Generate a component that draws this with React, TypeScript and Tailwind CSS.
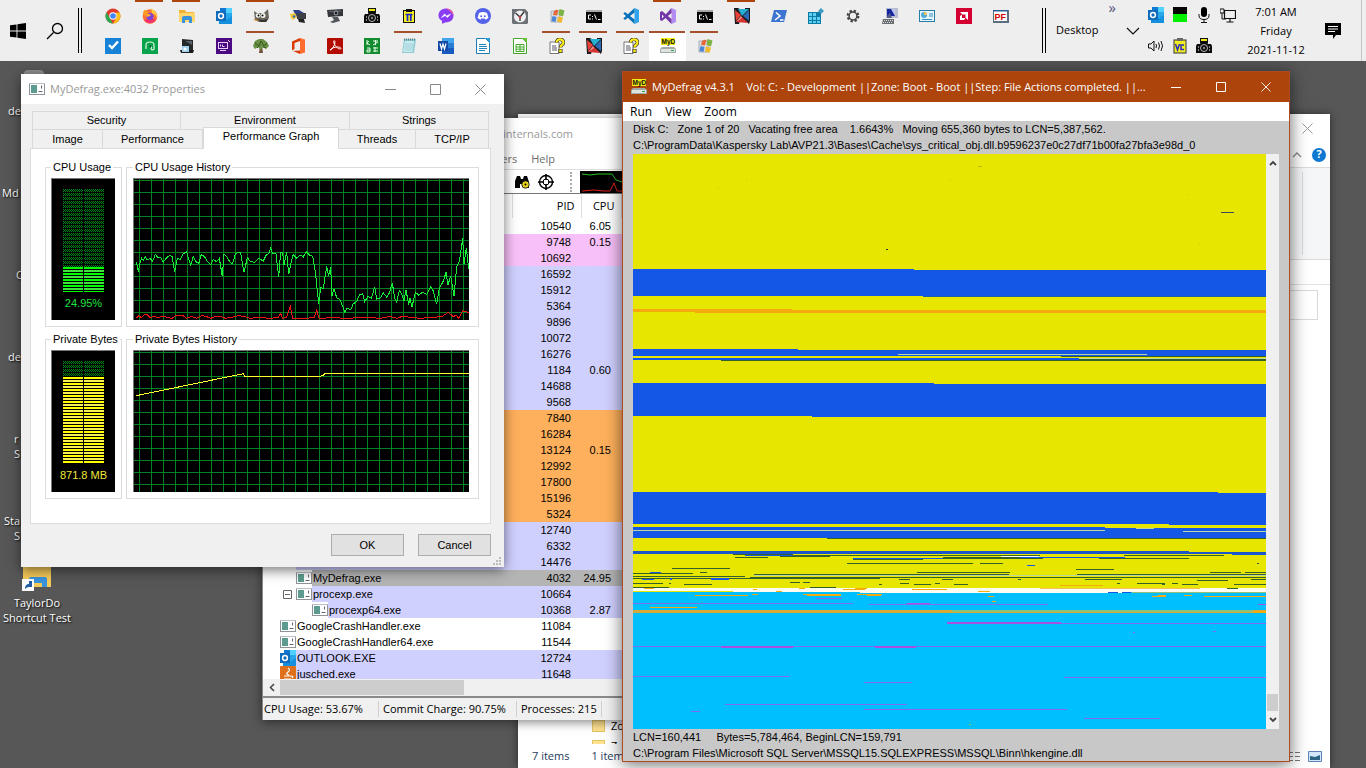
import React from "react";

type IconName =
  | "chrome" | "firefox" | "folder" | "outlook" | "gimp" | "tools" | "webcam" | "camera" | "clipPi"
  | "messenger" | "discord" | "clock" | "flags" | "cmd" | "vscode" | "vs" | "nshape" | "powershell"
  | "regedit" | "gear" | "computer" | "card" | "amd" | "pf" | "todo" | "evergreen" | "disk" | "purple"
  | "tree" | "office" | "acrobat" | "kanji" | "notepad" | "word" | "writer" | "calc" | "help" | "myd"
  | "led" | "mic" | "network" | "speaker" | "clipVc" | "app" | "java";

const drawings: Record<IconName, React.ReactNode> = {
  chrome: (
    <>
      <circle cx="8" cy="8" r="7.5" fill="#e33b2e" />
      <path d="M1.5 4.2 5 10.5 8 15.5A7.5 7.5 0 0 1 1.5 4.2Z" fill="#2da94f" />
      <path d="M8 15.5 11.5 9.5 11 4.5H14.6A7.5 7.5 0 0 1 8 15.5Z" fill="#fbc116" />
      <circle cx="8" cy="8" r="3.7" fill="#fff" />
      <circle cx="8" cy="8" r="2.8" fill="#4285f4" />
    </>
  ),
  firefox: (
    <>
      <circle cx="8" cy="8.5" r="7.3" fill="#ff7139" />
      <path d="M9 0.5C13 2.5 15.6 6 15 10c-1-3-3-4-5-5Z" fill="#ffd23c" />
      <path d="M1 6C1 3 2.5 1.8 3 1.5 3.5 3.3 5 3.8 6.5 4L4 9Z" fill="#ff9a1f" />
      <path d="M2 12c3 4 9 4.500 12-0.500l-5-1Z" fill="#f0336e" />
      <circle cx="8" cy="8.400" r="3.500" fill="#7a40d8" />
      <path d="M4.500 6.500c2-1 4 0 4.500 1L5 9Z" fill="#ffb02e" />
    </>
  ),
  folder: (
    <>
      <path d="M0 2h6l1 2h8v10H0Z" fill="#f0b432" />
      <path d="M0 5h16v9H0Z" fill="#ffd66b" />
      <path d="M3 15V10q0-2 2-2h6q2 0 2 2v5h-3v-3H6v3Z" fill="#3a94dd" />
    </>
  ),
  outlook: (
    <>
      <path d="M4 0h12v14H4Z" fill="#28a8ea" />
      <path d="M10 0H16v5h-6Z" fill="#50d0ff" />
      <path d="M4 0h6v5H4Z" fill="#0f78d4" />
      <path d="M3 9l7 3 6-4v8H3Z" fill="#1490df" />
      <rect y="3" width="10" height="10" fill="#0f6cbd" />
      <circle cx="5" cy="8" r="2.400" fill="none" stroke="#fff" strokeWidth="1.500" />
    </>
  ),
  gimp: (
    <>
      <path d="M1 3l3 2h7l4-4 1 9-3 4H6L2 12Z" fill="#6b675e" />
      <path d="M3 11l5 3h5l2-3-5 1Z" fill="#35332e" />
      <circle cx="5" cy="7.500" r="2.300" fill="#f5f5f0" />
      <circle cx="10" cy="7.500" r="2.500" fill="#f5f5f0" />
      <circle cx="5.500" cy="7.500" r="1" />
      <circle cx="9.500" cy="7.500" r="1" />
      <path d="M0 11l7 1-4 1Z" fill="#d98c2b" />
    </>
  ),
  tools: (
    <>
      <path d="M3 2h6l5 3v5H7Z" fill="#2f3f86" />
      <path d="M7 5h9v6H7Z" fill="#3c3f45" />
      <path d="M0 6l5-1 2 4-4 3-2-2Z" fill="#f3c93a" />
      <path d="M8 11h6l1 4-6-1Z" fill="#222" />
      <circle cx="4" cy="8.500" r="1.300" fill="#3662b8" />
    </>
  ),
  webcam: (
    <>
      <path d="M0 2l16-1v7l-15 1Z" fill="#34363a" />
      <path d="M2 3.500l12-.5" stroke="#666a70" />
      <circle cx="9" cy="5" r="2.400" fill="#89919a" />
      <circle cx="9" cy="5" r="1.200" fill="#111" />
      <path d="M5 9h6l2 4-7 2-3-1 4-2Z" fill="#52555a" />
    </>
  ),
  camera: (
    <>
      <path d="M4 0h8v5H4Z" fill="#111" />
      <path d="M5 1h6v2H5Z" fill="#f0ec10" />
      <path d="M1 6h3l1-2h6l1 2h3l1 2v7H0V8Z" fill="#0c0c0c" />
      <circle cx="8" cy="10" r="3.500" fill="none" stroke="#b7b7b7" />
      <circle cx="8" cy="10" r="1.200" fill="#888" />
      <path d="M2.500 8v6M13.500 8v6" stroke="#8a8a8a" strokeDasharray="2 1" />
    </>
  ),
  clipPi: (
    <>
      <rect x="2" y="2" width="12" height="13" fill="#111" />
      <rect x="3" y="3" width="10" height="11" fill="#f5ee20" />
      <path d="M5 1h6v3H5Z" fill="#111" />
      <path d="M4.500 6.500h7M6.500 6v7M9.800 6v7" stroke="#1826c9" strokeWidth="1.700" />
    </>
  ),
  messenger: (
    <>
      <path d="M8 .5c4.500 0 7.500 3 7.500 7s-3 6.800-7.500 6.800l-4 1.500v-3C1.500 11.400.5 9.600.5 7.500c0-4 3-7 7.500-7Z" fill="#8a3cf5" />
      <path d="M8 .5c4.500 0 7.500 3 7.500 7L12 3Z" fill="#f0559a" />
      <path d="M3.500 9.500 6.500 6l2.300 2 3.700-2-3 3.500-2.300-2Z" fill="#fff" stroke="#fff" strokeWidth=".6" />
    </>
  ),
  discord: (
    <>
      <circle cx="8" cy="8" r="8" fill="#5562ea" />
      <path d="M4 5q4-2 8 0l1.500 5-3 1.800-.8-1.200H6.300l-.8 1.200-3-1.800Z" fill="#fff" />
      <circle cx="6.200" cy="8.200" r="1" fill="#5562ea" />
      <circle cx="9.800" cy="8.200" r="1" fill="#5562ea" />
    </>
  ),
  clock: (
    <>
      <path d="M0 1h16v14l-1 1H1l-1-1Z" fill="#6c7176" />
      <circle cx="8" cy="8.500" r="6" fill="#eef0f1" />
      <path d="M3.500 5 8 9l4-5M8 9v4" stroke="#333" strokeWidth="1.300" fill="none" />
      <path d="M12 0h4v4Z" fill="#eee" />
      <circle cx="8" cy="9" r="1.300" fill="#c5373c" />
    </>
  ),
  flags: (
    <>
      <path d="M2 3h9v11H2Z" fill="#d8dde4" stroke="#97a2b0" strokeWidth=".8" />
      <path d="M5 3q3-2 4.500-.5L8 7.500 4 7Z" fill="#e46a3b" />
      <path d="M10.500 1l5 1.500-1.500 6-4.500-1.500Z" fill="#7cb342" />
      <path d="M3.500 8l4 1-1 5-4-1Z" fill="#4b86d6" />
      <path d="M9 8.500l5 1-1.500 5.500-4.500-1.500Z" fill="#f2b92e" />
    </>
  ),
  cmd: (
    <>
      <rect y="2" width="16" height="13" fill="#050505" />
      <path d="M0 2h16v2H0Z" fill="#a9a9a9" />
      <path d="M5 7H2.500v4H5M6.500 8v1M6.500 10.500v1M8.500 6.500l2 5M12 11.500h2.500" stroke="#f5f5f5" fill="none" />
    </>
  ),
  vscode: (
    <>
      <path d="M11.500 0 16 2v12l-4.500 2Z" fill="#2fa5ee" />
      <path d="M11.500 0v4.500L2 12 .3 10.500ZM.3 5.500 2 4l9.500 7.500V16Z" fill="#0b70b8" />
    </>
  ),
  vs: (
    <>
      <path d="M11.500 0 16 2v12l-4.500 2Z" fill="#b28cf0" />
      <path d="M11.500 0v5L2 13 0 12V4l2-1 9.500 8V16L2 6.500v4L11.500 0Z" fill="#7236a8" />
    </>
  ),
  nshape: (
    <>
      <path d="M0 0h4l7 4V0h5v13l-1 3-8-7-2 7H1Z" fill="#1a1a1d" />
      <path d="M4 1h7l4 0-7 7Z" fill="#27aed3" />
      <path d="M1 2l6 5-5 6Z" fill="#e6423a" />
      <path d="M9 8l6-6v11Z" fill="#2a6ab6" />
      <path d="M2 14l5-6 7 7Z" fill="#d63232" />
      <path d="M2 14l5-6 1 2Z" fill="#f5908a" />
    </>
  ),
  powershell: (
    <>
      <path d="M3 2h13l-3 12H0Z" fill="#3c74d0" />
      <path d="M5 4.500 9 8l-5 4M9 12h3.500" stroke="#fff" strokeWidth="1.600" fill="none" />
    </>
  ),
  regedit: (
    <>
      <path d="M0 4h13v12H0Z" fill="#0c7ba8" />
      <path d="M1 5h3v3H1zM5 5h3v3H5zM1 9h3v3H1zM5 9h3v3H5zM9 9h3v3H9zM1 13h3v2H1zM5 13h3v2H5zM9 13h3v2H9z" fill="#5dd0f2" />
      <path d="M10 3l3-3 3 3-3 3Z" fill="#3f9cc4" />
    </>
  ),
  gear: (
    <>
      <circle cx="8" cy="8" r="5.300" fill="none" stroke="#444" strokeWidth="2.200" strokeDasharray="2.300 1.860" />
      <circle cx="8" cy="8" r="3.900" fill="none" stroke="#444" strokeWidth="1.500" />
    </>
  ),
  computer: (
    <>
      <path d="M4 0h12v10H4Z" fill="#b8bed2" />
      <path d="M5 1h8v7H5Z" fill="#1526a0" />
      <path d="M9 1h4v7Z" fill="#e9edff" opacity=".8" />
      <path d="M5 8l3-3 2 5H5Z" fill="#555b88" />
      <path d="M1 11h11v5H0Z" fill="#686d70" />
      <path d="M2 12.500h9M1 14.500h9" stroke="#ddd" strokeDasharray="1 1" />
    </>
  ),
  card: (
    <>
      <rect x=".5" y="2.500" width="15" height="11" fill="#e7f5fd" stroke="#2a7aa6" />
      <circle cx="5" cy="7" r="3" fill="#4facdc" />
      <path d="M5 7V4a3 3 0 0 1 3 3Z" fill="#f0c34d" />
      <path d="M10 6h4M10 8h4M3 11.500h10" stroke="#2f8fc1" />
    </>
  ),
  amd: (
    <>
      <rect width="16" height="16" fill="#d50032" />
      <path d="M4 4h8v8l-2.500-2.500v-3h-3ZM4 8l2-1.500V10h3.500L8 12H4Z" fill="#fff" />
    </>
  ),
  pf: (
    <>
      <rect y="2" width="16" height="13" fill="#5b6f80" />
      <rect x="1" y="3" width="13" height="10" fill="#fff" />
      <path d="M0 2h15v1.500H0Z" fill="#2a5f96" />
      <text x="1.500" y="12" fontSize="9" fontWeight="900" fontFamily="Liberation Sans, sans-serif" fill="#d40000">PF</text>
    </>
  ),
  todo: (
    <>
      <rect width="16" height="16" fill="#1683d8" />
      <path d="M4 7l3 3 6-6.500" stroke="#fff" strokeWidth="2.400" fill="none" />
    </>
  ),
  evergreen: (
    <>
      <rect width="16" height="16" fill="#08a34a" />
      <path d="M4 11V7q0-3 4-3t4 3v4q0 1-2 1-2-2 0-3" stroke="#dff7e7" strokeWidth="1.200" fill="none" />
      <path d="M7 8l2-1v3Z" fill="#0b5a2d" />
    </>
  ),
  disk: (
    <>
      <path d="M3 1l11 1v10H3Z" fill="#26292c" />
      <path d="M6 3l7 0v4Z" fill="#5a6168" />
      <path d="M1 12h14l-1 3H2Z" fill="#1b1b1b" />
      <path d="M3 8h7v6H3Z" fill="#9fd2ee" />
      <circle cx="6" cy="11" r="1.600" fill="#fff" />
    </>
  ),
  purple: (
    <>
      <rect width="16" height="16" fill="#4b0a82" />
      <rect x="2.500" y="4.500" width="9" height="6" fill="none" stroke="#e7cffa" />
      <path d="M4 12.500h6M4.500 6.500v2M6.500 6.500v2h2M12 2l2 2" stroke="#e7cffa" />
    </>
  ),
  tree: (
    <>
      <path d="M7 8h2l1 7H6Z" fill="#72523a" />
      <path d="M0 8l2-5 4-2 4 0 4 3 2 4-3 3-3-2-2 3-3-3-3 2Z" fill="#678f45" />
      <path d="M2 5l4 3 2-5 3 5 3-3M4 10l2-2M10 9l3 1" stroke="#33591f" fill="none" />
    </>
  ),
  office: (
    <>
      <path d="M10 0l5 1.500v13L10 16Z" fill="#ff6c2f" />
      <path d="M10 0 2 3.500v9L4.500 11V5l5.500-2ZM3 13l7-.5V16Z" fill="#d83b01" />
    </>
  ),
  acrobat: (
    <>
      <rect width="16" height="16" rx="1" fill="#b30b00" />
      <path d="M3 12c2 1 5-6 5-8s-2-2-1 1 4 6 6 6 1-2-2-2-7 1-8 3Z" fill="none" stroke="#fff" />
    </>
  ),
  kanji: (
    <>
      <rect width="16" height="16" fill="#128a30" />
      <path d="M3 2v5M5 3 3 5l3 2M9 3h5M11.500 2v5M9 7l5-3M3 10h3v4H3v-2h3M9 10h5M9 13h5M11 9v5" stroke="#e8ffe8" fill="none" />
    </>
  ),
  notepad: (
    <>
      <path d="M3 1h12l-2 14H1Z" fill="#8fcbd4" />
      <path d="M4 3h9l-1.500 11H2Z" fill="#c9ecef" />
      <path d="M3 1.500h12" stroke="#5b7f89" strokeDasharray="1 1" strokeWidth="2" />
      <path d="M4 6h8M4 8h8M3.500 10h8M3.500 12h8" stroke="#84bfc9" strokeWidth=".6" />
    </>
  ),
  word: (
    <>
      <path d="M4 0h12v5H4Z" fill="#41a5ee" />
      <path d="M4 5h12v5H4Z" fill="#2b7cd3" />
      <path d="M4 10h12v6H4Z" fill="#185abd" />
      <rect y="3" width="10" height="10" fill="#124aa3" />
      <path d="M2 5.500 3.500 11 5 6l1.500 5L8 5.500" stroke="#fff" strokeWidth="1.200" fill="none" />
    </>
  ),
  writer: (
    <>
      <path d="M1.500.500h9l4 4v11h-13Z" fill="#fff" stroke="#1c7fb6" />
      <path d="M10 0h5v5Z" fill="#2a9fd6" />
      <path d="M4 6.500h7M4 8.500h8M4 10.500h8M4 12.500h6" stroke="#2287bd" />
    </>
  ),
  calc: (
    <>
      <path d="M1.500.500h9l4 4v11h-13Z" fill="#fff" stroke="#43a829" />
      <path d="M10 0h5v5Z" fill="#67c13b" />
      <path d="M4 6.500h8v7H4ZM4 9h8M4 11.200h8M8 6.500v7" stroke="#43a829" fill="none" />
    </>
  ),
  help: (
    <>
      <path d="M1 4h9v11.500H1Z" fill="#fff" stroke="#555" strokeWidth=".8" />
      <path d="M3 8h4M3 10h5M3 12h5" stroke="#445" strokeWidth=".9" />
      <path d="M7.500 4.500c0-4.500 7-4 7 0 0 2.500-3 2-3 5" stroke="#222" strokeWidth="3.400" fill="none" />
      <rect x="9.500" y="11" width="4" height="4" fill="#222" />
      <path d="M7.500 4.500c0-4.500 7-4 7 0 0 2.500-3 2-3 5" stroke="#ffee15" strokeWidth="2.200" fill="none" />
      <rect x="10.200" y="11.500" width="2.600" height="2.800" fill="#ffee15" />
    </>
  ),
  myd: (
    <>
      <rect x="1" width="14" height="7" fill="#f3ed12" />
      <text x="1.500" y="6.300" fontSize="6.500" fontWeight="700" fontFamily="Liberation Sans, sans-serif" fill="#111">MyD</text>
      <path d="M2 9h12l2 2v4H0v-4Z" fill="#a4aaa7" />
      <path d="M1 11h14v3H1Z" fill="#dfe3e0" />
      <path d="M11 12.500h3" stroke="#27a844" />
    </>
  ),
  led: (
    <>
      <rect x="1" width="14" height="7" fill="#050505" />
      <rect x="1" y="7" width="14" height="8" fill="#00ee00" />
    </>
  ),
  mic: (
    <>
      <rect x="5" width="6" height="10" rx="3" />
      <path d="M3 7v1.500q0 4 5 4t5-4V7M8 12v3M5 15.500h6" stroke="#111" fill="none" />
    </>
  ),
  network: (
    <>
      <path d="M4.500 3.500h11v8h-11ZM10 12v3M6.500 15h7" stroke="#111" fill="none" strokeWidth="1.200" />
      <path d="M0 2h4v4H0Z" fill="#eee" stroke="#111" />
      <path d="M2 6v6h4" stroke="#111" fill="none" />
    </>
  ),
  speaker: (
    <>
      <path d="M.5 6h2.500l3-3v10l-3-3H.5Z" fill="none" stroke="#111" />
      <path d="M8 6q1 2 0 4M10.500 4.500q2 3.500 0 7M13 3q3 5 0 10" fill="none" stroke="#111" />
    </>
  ),
  clipVc: (
    <>
      <rect x="2" y="2" width="12" height="13" fill="#f5ee20" stroke="#333" />
      <path d="M5 0h6v3H5Z" fill="#666" />
      <path d="M3.500 6l2 6 2-6M12 7H9v4.500h3" stroke="#2a2cba" strokeWidth="1.500" fill="none" />
    </>
  ),
  app: (
    <>
      <rect x=".5" y="2.500" width="15" height="11" fill="#fff" stroke="#8d9399" />
      <path d="M2 4h6v8H2Z" fill="#5c9c90" />
      <path d="M12.500 4.500v3M9.500 10.500h4" stroke="#667" />
      <path d="M0 2h16v1H0Z" fill="#b9bfc4" />
    </>
  ),
  java: (
    <>
      <rect width="16" height="16" rx="1" fill="#e0701a" />
      <path d="M8 2q3 2 0 4t1 3M4 10h7q3 0 1 2M4 13h7" stroke="#fff" fill="none" strokeWidth="1.200" />
    </>
  ),
};

function Icon({ name, className = "size-4" }: { name: IconName; className?: string }) {
  return (
    <svg viewBox="0 0 16 16" className={`${className} shrink-0`} aria-hidden="true">
      {drawings[name]}
    </svg>
  );
}

/* ---------- Taskbar ---------- */

type Pin = { icon: IconName; top?: boolean; open?: boolean; active?: boolean };

const pinsTop: Pin[] = [
  { icon: "chrome" }, { icon: "firefox", top: true }, { icon: "folder", top: true }, { icon: "outlook" },
  { icon: "gimp", top: true, open: true }, { icon: "tools" }, { icon: "webcam" }, { icon: "camera" },
  { icon: "clipPi", open: true }, { icon: "messenger" }, { icon: "discord" }, { icon: "clock" },
  { icon: "flags", open: true }, { icon: "cmd", open: true }, { icon: "vscode", open: true },
  { icon: "vs", top: true, open: true, active: true }, { icon: "cmd", open: true }, { icon: "nshape", top: true },
  { icon: "powershell" }, { icon: "regedit" }, { icon: "gear" }, { icon: "computer" }, { icon: "card" },
  { icon: "amd" }, { icon: "pf" },
];

const pinsBottom: Pin[] = [
  { icon: "todo" }, { icon: "evergreen" }, { icon: "disk" }, { icon: "purple" }, { icon: "tree" },
  { icon: "office" }, { icon: "acrobat" }, { icon: "kanji" }, { icon: "notepad" }, { icon: "word" },
  { icon: "writer" }, { icon: "calc" }, { icon: "help" }, { icon: "nshape" }, { icon: "help" },
  { icon: "myd", active: true }, { icon: "flags" },
];

function PinButton({ pin, lower }: { pin: Pin; lower?: boolean }) {
  return (
    <button
      aria-label={pin.icon}
      className={`relative flex w-[37px] items-center justify-center ${lower ? "h-[30px]" : "h-[31px]"} ${lower && pin.active ? "bg-white" : ""}`}
    >
      <Icon name={pin.icon} />
      {pin.top && <span className="absolute top-0 left-1 h-[2px] w-7 bg-[#ac440c]" />}
      {pin.open && (
        <span className={`absolute top-[31px] z-10 h-[2px] bg-[#a5502c] ${pin.active ? "left-0 w-9" : "left-1 w-7"}`} />
      )}
    </button>
  );
}

function DoubleRule() {
  return <div className="h-[45px] w-1 shrink-0 border-x border-black" />;
}

function Taskbar() {
  const tray: IconName[] = ["outlook", "led", "mic", "network", "speaker", "clipVc", "camera"];
  return (
    <header className="relative z-50 flex h-[61px] w-full items-center bg-[#eeeeee] text-black">
      <button aria-label="Start" className="flex h-full w-9 items-center justify-center">
        <svg viewBox="0 0 16 16" className="size-4">
          <path d="M0 2.300 6.500 1.400v6.100H0ZM7.400 1.200 16 0v7.500H7.400ZM0 8.400h6.500v6.200L0 13.700ZM7.400 8.400H16V16l-8.600-1.200Z" />
        </svg>
      </button>
      <button aria-label="Search" className="flex h-full w-[37px] items-center justify-center">
        <svg viewBox="0 0 18 18" className="size-[18px]">
          <path d="M1 17 7.500 10.500" stroke="#000" strokeWidth="1.300" />
          <circle cx="11.500" cy="6.500" r="5" fill="none" stroke="#000" strokeWidth="1.300" />
        </svg>
      </button>
      <div className="mr-3 ml-[5px]">
        <DoubleRule />
      </div>
      <nav aria-label="Pinned apps" className="self-start">
        <div className="flex">{pinsTop.map((p, i) => <PinButton key={i} pin={p} />)}</div>
        <div className="flex">{pinsBottom.map((p, i) => <PinButton key={i} pin={p} lower />)}</div>
      </nav>
      <div className="mr-1 ml-auto flex h-full items-center border-r border-[#c4c4c4] pr-[7px]">
        <DoubleRule />
        <button className="relative ml-[10px] flex h-full w-[88px] items-center justify-between pr-1 text-[11px]">
          Desktop
          <svg viewBox="0 0 14 8" className="h-2 w-[14px]"><path d="M1 1l6 6 6-6" fill="none" stroke="#111" strokeWidth="1.200" /></svg>
          <span className="absolute top-0 right-7 text-[15px] leading-[14px] text-[#54547e]">»</span>
        </button>
        <div className="grid h-full grid-cols-4 grid-rows-2">
          {tray.map((t) => (
            <span key={t} className="flex w-6 items-center justify-center"><Icon name={t} /></span>
          ))}
        </div>
        <div className="w-[72px] text-center text-[11px] leading-[19px]">
          <div>7:01 AM</div>
          <div>Friday</div>
          <div>2021-11-12</div>
        </div>
        <button aria-label="Notifications" className="flex h-full w-[42px] items-center justify-center">
          <svg viewBox="0 0 16 16" className="size-4">
            <path d="M0 0h16v12H11l-3 4v-4H0Z" />
            <path d="M3 3.500h10M3 6h10M3 8.500h7" stroke="#fff" />
          </svg>
        </button>
      </div>
    </header>
  );
}

/* ---------- Desktop shortcuts ---------- */

const shortcuts: { lines: string[]; pad: string }[] = [
  { lines: ["de"], pad: "pl-2" },
  { lines: ["Md"], pad: "pl-0.5" },
  { lines: ["C"], pad: "pl-4" },
  { lines: ["de"], pad: "pl-2" },
  { lines: ["r", "S"], pad: "pl-3.5" },
  { lines: ["Sta", "S"], pad: "pl-1" },
];

function Shortcuts() {
  return (
    <ul className="mt-px w-[74px] text-[11px] leading-[15px] text-white [text-shadow:1px_1px_2px_black]">
      {shortcuts.map((s, i) => (
        <li key={i} className={`h-[82px] ${s.pad}`}>
          <div className="h-[41px] pt-2 pl-4">{i === 0 && <div className="h-4 w-5 rounded-sm bg-[#8f8f8f]" />}</div>
          {s.lines.map((l, j) => <div key={j} className={j === 1 && s.lines[0] === "Sta" ? "pl-2.5" : ""}>{l}</div>)}
        </li>
      ))}
      <li className="text-center">
        <div className="flex h-[41px] justify-center">
          <svg viewBox="0 0 30 38" className="h-[38px] w-[30px]">
            <path d="M1 4h28v29H1Z" fill="#f7cb59" />
            <path d="M7 33V25q0-2 2-2h14q2 0 2 2v8h-5v-4h-8v4Z" fill="#3a94dd" />
            <rect y="25" width="12" height="12" fill="#fff" />
            <path d="M3 35q0-5 4-5v-3h3v6h-3q-2 0-4 2Z" fill="#245ea5" />
          </svg>
        </div>
        <div>TaylorDo</div>
        <div className="whitespace-nowrap">Shortcut Test</div>
      </li>
    </ul>
  );
}

/* ---------- File explorer ---------- */

function CloseGlyph({ className = "size-[11px]" }: { className?: string }) {
  return (
    <svg viewBox="0 0 11 11" className={className}><path d="M.5.5l10 10M10.500.5l-10 10" stroke="currentColor" fill="none" /></svg>
  );
}

function Explorer() {
  return (
    <section aria-label="File explorer" className="absolute top-[114px] bottom-0 left-[518px] flex w-[812px] flex-col bg-white text-[11px] shadow-[0_0_8px_rgba(0,0,0,0.5)]">
      <div className="flex h-7 items-center justify-end pr-[17px] text-[#999]">
        <button aria-label="Close"><CloseGlyph /></button>
      </div>
      <div className="flex h-[25px] items-center justify-end gap-[10px] pr-1">
        <svg viewBox="0 0 10 6" className="h-1.5 w-2.5"><path d="M1 5l4-4 4 4" fill="none" stroke="#888" strokeWidth="1.300" /></svg>
        <button aria-label="Help" className="flex size-[14px] items-center justify-center rounded-full bg-[#0f78d0] text-[11px] font-bold text-white">?</button>
      </div>
      <div className="flex h-[93px] justify-end border-y border-[#dadbdc] bg-[#f5f6f7] pr-[27px]">
        <div className="my-1 border-r border-[#dadbdc]" />
      </div>
      <div className="h-[25px] border-b border-[#e2e2e2]" />
      <div className="mt-[5px] mr-3 h-[30px] border border-[#d9d9d9]" />
      <div className="mt-auto h-[28px] overflow-hidden pl-[74px]">
        {["Zo", "Zo"].map((t, i) => (
          <div key={i} className="flex h-5 items-center gap-1.5 leading-4">
            <span className="h-3 w-[13px] border border-[#e5c365] bg-[#ffe391]" />
            {t}
          </div>
        ))}
      </div>
      <footer className="flex h-6 items-center gap-[22px] pr-2 pl-[14px] leading-4 text-[#1e395b]">
        <span>7 items</span>
        <span>1 item</span>
        <span className="ml-auto flex items-center gap-2">
          <svg viewBox="0 0 12 11" className="h-[11px] w-3"><path d="M0 1.500h5M7 1.500h5M0 5.500h5M7 5.500h5M0 9.500h5M7 9.500h5" stroke="#777" /></svg>
          <svg viewBox="0 0 14 11" className="h-[11px] w-[14px]"><path d="M.5.5h13v10H.5Z" fill="#d3e9fb" stroke="#5e82b5" /><path d="M2 5l5 1 5-2v5H2Z" fill="#2c6386" /></svg>
        </span>
      </footer>
    </section>
  );
}

/* ---------- Process explorer ---------- */

type Tone = "white" | "pink" | "lav" | "orange" | "gray";
type Proc = { pid: string; cpu?: string; tone: Tone; name?: string; icon?: IconName; depth?: 0 | 1 | 2; box?: boolean };

const toneClass: Record<Tone, string> = {
  white: "bg-white",
  pink: "bg-[#f8c0f8]",
  lav: "bg-[#d0d0ff]",
  orange: "bg-[#ffb05c]",
  gray: "bg-[#b4b4b4]",
};

const indentClass = ["w-[17px]", "w-[33px]", "w-[49px]"];

const procs: Proc[] = [
  { pid: "10540", cpu: "6.05", tone: "white" },
  { pid: "9748", cpu: "0.15", tone: "pink" },
  { pid: "10692", tone: "pink" },
  { pid: "16592", tone: "lav" },
  { pid: "15912", tone: "lav" },
  { pid: "5364", tone: "lav" },
  { pid: "9896", tone: "lav" },
  { pid: "10072", tone: "lav" },
  { pid: "16276", tone: "lav" },
  { pid: "1184", cpu: "0.60", tone: "lav" },
  { pid: "14688", tone: "lav" },
  { pid: "9568", tone: "lav" },
  { pid: "7840", tone: "orange" },
  { pid: "16284", tone: "orange" },
  { pid: "13124", cpu: "0.15", tone: "orange" },
  { pid: "12992", tone: "orange" },
  { pid: "17800", tone: "orange" },
  { pid: "15196", tone: "orange" },
  { pid: "5324", tone: "orange" },
  { pid: "12740", tone: "lav" },
  { pid: "6332", tone: "lav" },
  { pid: "14476", tone: "lav" },
  { pid: "4032", cpu: "24.95", tone: "gray", name: "MyDefrag.exe", icon: "app", depth: 1 },
  { pid: "10664", tone: "lav", name: "procexp.exe", icon: "app", depth: 1, box: true },
  { pid: "10368", cpu: "2.87", tone: "lav", name: "procexp64.exe", icon: "app", depth: 2 },
  { pid: "11084", tone: "white", name: "GoogleCrashHandler.exe", icon: "app", depth: 0 },
  { pid: "11544", tone: "white", name: "GoogleCrashHandler64.exe", icon: "app", depth: 0 },
  { pid: "12724", tone: "lav", name: "OUTLOOK.EXE", icon: "outlook", depth: 0 },
  { pid: "11648", tone: "lav", name: "jusched.exe", icon: "java", depth: 0 },
];

function ProcessExplorer() {
  return (
    <section aria-label="Process explorer" className="absolute top-[118px] left-[262px] w-[480px] border-l border-[#8a8a8a] bg-white shadow-[0_2px_10px_rgba(0,0,0,0.5)]">
      <div className="flex h-8 items-center pl-[240px] text-[11px] text-[#999]">internals.com</div>
      <div className="flex h-[19px] items-center gap-[14px] pl-[225px] text-[11px] text-[#6d6d6d]">
        <span>Users</span>
        <span>Help</span>
      </div>
      <div className="flex h-[25px] items-center gap-2 border-y border-t-[#ddd] border-b-[#777] pl-[251px]">
        <svg viewBox="0 0 16 16" className="size-4">
          <path d="M1 14V7l2-5h3l1 3h2l1-3h3l2 6v6h-5v-4H6v4Z" />
          <circle cx="11.500" cy="10.500" r="3.700" fill="#e8d21a" stroke="#222" />
          <circle cx="11.500" cy="10.500" r="1" />
        </svg>
        <svg viewBox="0 0 16 16" className="size-4">
          <circle cx="8" cy="8" r="6.500" fill="none" stroke="#000" strokeWidth="1.400" />
          <circle cx="8" cy="8" r="3" fill="none" stroke="#000" />
          <path d="M8 0v6M8 10v6M0 8h6M10 8h6" stroke="#000" strokeWidth="1.600" />
        </svg>
        <span className="ml-2 h-5 border-l-2 border-dotted border-[#aaa]" />
        <svg viewBox="0 0 80 22" preserveAspectRatio="none" className="h-[22px] w-20 bg-black">
          <path d="M2 3l8 1 8-1 14 0 4 6 6 2h38" fill="none" stroke="#24c424" />
          <path d="M2 20l12-1 10 1 6 0 4-8 3 8h43" fill="none" stroke="#e32020" />
        </svg>
      </div>
      <div className="h-[485px] overflow-hidden font-['Liberation_Sans',sans-serif] text-[11px]">
        <table className="w-full table-fixed border-collapse leading-4 text-black">
          <colgroup>
            <col className="w-[249px]" />
            <col className="w-[69px]" />
            <col className="w-10" />
            <col />
          </colgroup>
          <thead>
            <tr className="h-6 bg-white font-['Open_Sans',sans-serif] font-normal">
              <th className="border-r border-[#ddd] p-0" />
              <th className="border-r border-[#ddd] p-0 pr-1.5 text-right font-normal">PID</th>
              <th className="border-r border-[#ddd] p-0 pr-1.5 text-right font-normal">CPU</th>
              <th className="p-0" />
            </tr>
          </thead>
          <tbody>
            {procs.map((p) => (
              <tr key={p.pid} className="h-4">
                <td className="p-0">
                  <div className="flex h-4">
                    <span className={`${indentClass[p.depth ?? 0]} flex shrink-0 items-center justify-end pr-1`}>
                      {p.box && (
                        <svg viewBox="0 0 9 9" className="size-[9px] shrink-0"><path d="M.5.5h8v8h-8ZM2 4.500h5" fill="none" stroke="#666" /></svg>
                      )}
                    </span>
                    {p.icon ? <Icon name={p.icon} /> : <span className="w-4" />}
                    <span className={`h-4 flex-1 pl-px ${toneClass[p.tone]}`}>{p.name}</span>
                  </div>
                </td>
                <td className={`p-0 pr-[10px] text-right ${toneClass[p.tone]}`}>{p.pid}</td>
                <td className={`p-0 pr-[10px] text-right ${toneClass[p.tone]}`}>{p.cpu}</td>
                <td className={`p-0 ${toneClass[p.tone]}`} />
              </tr>
            ))}
          </tbody>
        </table>
      </div>
      <div className="flex h-[17px] items-center bg-[#f0f0f0]">
        <button aria-label="Scroll left" className="flex w-[17px] justify-center">
          <svg viewBox="0 0 6 9" className="h-[9px] w-1.5"><path d="M5 1 1.500 4.500 5 8" fill="none" stroke="#444" strokeWidth="1.500" /></svg>
        </button>
        <div className="h-[15px] w-[184px] bg-[#cdcdcd]" />
      </div>
      <footer className="flex h-6 items-center border-t-2 border-[#8a8a8a] bg-[#f0f0f0] text-[11px] whitespace-nowrap">
        <span className="w-[116px] border-r border-[#d0d0d0] pl-px">CPU Usage: 53.67%</span>
        <span className="w-[138px] border-r border-[#d0d0d0] pl-1">Commit Charge: 90.75%</span>
        <span className="border-r border-[#d0d0d0] pr-1 pl-1">Processes: 215</span>
      </footer>
    </section>
  );
}

/* ---------- Properties dialog ---------- */

const cpuTrace =
  "409,590 415,620 421,590 425,580 430,586 436,575 442,585 450,580 458,588 466,568 474,578 482,578 490,592 498,580 508,572 516,574 524,620 532,580 540,584 548,568 560,560 566,582 572,600 580,574 588,590 596,596 604,568 614,576 622,590 632,598 640,584 650,590 658,580 667,634 672,568 680,574 690,592 698,596 706,566 714,562 722,564 732,622 742,578 752,590 764,592 776,580 790,588 800,568 806,566 812,548 818,566 828,566 836,636 842,562 848,562 852,600 860,562 866,628 874,590 880,568 890,580 900,570 910,576 918,560 928,570 938,574 946,620 956,716 962,668 970,670 980,604 986,632 992,606 996,692 1002,672 1010,698 1020,704 1028,724 1034,742 1040,730 1052,734 1060,716 1070,710 1078,690 1088,686 1094,710 1104,694 1114,700 1124,666 1130,702 1140,700 1150,684 1160,696 1168,684 1177,654 1184,700 1190,712 1198,676 1206,690 1212,708 1218,674 1226,720 1230,700 1236,726 1246,682 1256,690 1268,682 1280,688 1292,664 1300,678 1310,718 1318,670 1330,648 1338,622 1344,660 1352,632 1362,694 1370,604 1378,590 1388,520 1392,598 1399,550 1406,612";

const kernelTrace =
  "409,760 416,752 424,758 432,750 440,748 450,758 462,754 474,758 488,753 504,758 516,760 530,750 546,750 560,760 574,754 590,760 604,752 618,754 632,760 646,754 662,754 676,760 700,756 716,752 732,754 750,760 780,757 806,760 834,758 842,745 848,760 860,756 871,725 878,760 910,760 942,758 950,736 957,760 1000,758 1040,760 1100,757 1140,760 1170,754 1190,760 1210,753 1230,757 1260,760 1300,757 1325,755 1345,742 1360,755 1368,750 1376,760 1388,738 1406,742";

function Trace({ id, children }: { id: string; children: React.ReactNode }) {
  return (
    <svg viewBox="402 342 1005 423" preserveAspectRatio="none" className="h-[142px] w-full border-t border-l border-[#777] bg-black" shapeRendering="crispEdges">
      <defs>
        <pattern id={id} x="417" y="381" width="36" height="36" patternUnits="userSpaceOnUse">
          <path d="M0 0h36v3H0ZM0 0h3v36H0Z" fill="#008020" />
        </pattern>
      </defs>
      <rect x="402" y="342" width="1005" height="423" fill={`url(#${id})`} />
      {children}
    </svg>
  );
}

function Meter({ id, level, bright, soft, label, textClass }: { id: string; level: number; bright: string; soft: string; label: string; textClass: string }) {
  return (
    <div className={`flex h-[142px] flex-col items-center border-t border-l border-[#777] bg-black pt-[10px] ${textClass}`}>
      <svg viewBox="0 0 41 104" className="h-[104px] w-[41px]" shapeRendering="crispEdges">
        <defs>
          <pattern id={`${id}-dim`} width="2" height="4" patternUnits="userSpaceOnUse">
            <rect width="1" height="1" fill="#008c1c" />
            <rect x="1" y="1" width="1" height="1" fill="#008c1c" />
            <rect y="2" width="1" height="1" fill="#008c1c" />
          </pattern>
          <pattern id={`${id}-lit`} y={level} width="41" height="6" patternUnits="userSpaceOnUse">
            <rect width="41" height="2" fill={bright} />
            <rect y="3" width="41" height="2" fill={soft} />
          </pattern>
        </defs>
        <rect width="41" height={level} fill={`url(#${id}-dim)`} />
        <rect y={level} width="41" height={103 - level} fill={`url(#${id}-lit)`} />
        <rect x="20" width="1" height="104" fill="#000" />
      </svg>
      <span className="mt-0.5 leading-4">{label}</span>
    </div>
  );
}

function Group({ title, narrow, children }: { title: string; narrow?: boolean; children: React.ReactNode }) {
  return (
    <fieldset className={`h-[166px] min-w-0 border border-[#dcdcdc] ${narrow ? "w-[77px] pr-[6px] pl-[5px]" : "flex-1 pr-[9px] pl-[6px]"}`}>
      <legend className="h-3 px-0.5 leading-3 whitespace-nowrap">{title}</legend>
      <div className="pt-[5px]">{children}</div>
    </fieldset>
  );
}

function Tab({ label, className, active }: { label: string; className: string; active?: boolean }) {
  return (
    <button
      role="tab"
      aria-selected={!!active}
      className={`border-t border-r border-[#d9d9d9] ${className} ${active ? "relative z-10 -mt-0.5 -mb-px border-l bg-white pb-1" : "bg-[#f0f0f0]"}`}
    >
      {label}
    </button>
  );
}

function PropertiesDialog() {
  return (
    <section aria-label="Properties" className="absolute top-[74px] left-[21px] z-20 w-[483px] bg-[#f0f0f0] text-[11px] shadow-[0_3px_12px_rgba(0,0,0,0.55)]">
      <div className="flex h-[30px] items-center bg-white pr-[18px] pl-2 text-[#999]">
        <Icon name="app" />
        <span className="ml-[5px]">MyDefrag.exe:4032 Properties</span>
        <div className="ml-auto flex items-center gap-[34px] text-[#888]">
          <button aria-label="Minimize"><svg viewBox="0 0 11 11" className="size-[11px]"><path d="M0 5.500h11" stroke="currentColor" /></svg></button>
          <button aria-label="Maximize"><svg viewBox="0 0 11 11" className="size-[11px]"><path d="M.5.5h10v10H.5Z" fill="none" stroke="currentColor" /></svg></button>
          <button aria-label="Close"><CloseGlyph /></button>
        </div>
      </div>
      <div className="pt-[7px] pr-[13px] pl-[9px] font-['Liberation_Sans',sans-serif]">
        <div role="tablist" className="mx-0.5 border-l border-[#d9d9d9]">
          <div className="flex h-[18px]">
            <Tab label="Security" className="w-[148px]" />
            <Tab label="Environment" className="w-[169px]" />
            <Tab label="Strings" className="flex-1" />
          </div>
          <div className="flex h-[19px]">
            <Tab label="Image" className="w-[70px]" />
            <Tab label="Performance" className="w-[100px]" />
            <Tab label="Performance Graph" className="w-[136px]" active />
            <Tab label="Threads" className="w-[77px]" />
            <Tab label="TCP/IP" className="flex-1" />
          </div>
        </div>
        <div className="border border-[#dcdcdc] bg-white pt-[12px] pr-[11px] pb-6 pl-[14px]">
          <div className="flex gap-1">
            <Group title="CPU Usage" narrow>
              <Meter id="cpu" level={78} bright="#00ff00" soft="#40e040" label="24.95%" textClass="text-[#20e040]" />
            </Group>
            <Group title="CPU Usage History">
              <Trace id="grid-cpu">
                <polyline points={cpuTrace} fill="none" stroke="#18f038" strokeWidth="3" />
                <polyline points={kernelTrace} fill="none" stroke="#f01414" strokeWidth="3" />
              </Trace>
            </Group>
          </div>
          <div className="mt-[6px] flex gap-1">
            <Group title="Private Bytes" narrow>
              <Meter id="bytes" level={16} bright="#ffff00" soft="#f8f050" label="871.8 MB" textClass="text-[#f0e838]" />
            </Group>
            <Group title="Private Bytes History">
              <Trace id="grid-bytes">
                <polyline points="409,476 730,410 734,419 948,419 970,416 974,410 1407,410" fill="none" stroke="#ffff30" strokeWidth="3" />
              </Trace>
            </Group>
          </div>
        </div>
        <div className="flex justify-end gap-[14px] pt-[10px] pb-[11px]">
          <button className="h-[22px] w-[73px] border border-[#adadad] bg-[#e1e1e1]">OK</button>
          <button className="h-[22px] w-[73px] border border-[#adadad] bg-[#e1e1e1]">Cancel</button>
        </div>
      </div>
      <svg viewBox="0 0 8 8" className="absolute right-[3px] bottom-[2px] size-2"><path d="M6 0h2v2H6zM3 3h2v2H3zM6 3h2v2H6zM0 6h2v2H0zM3 6h2v2H3zM6 6h2v2H6z" fill="#bbb" /></svg>
    </section>
  );
}

/* ---------- MyDefrag ---------- */

const Y = "#e6e600";
const B = "#1457e6";
const D = "#35602a";
const L = "#b9d9a0";
const O = "#f5aa10";
const P = "#7f6cec";
const M = "#a850e0";
const G = "#8fbf78";
const W = "#fdfdf0";

/* Each strip: left, top, width, height, colour, in map units */
const strips: [number, number, number, number, string][] = [
  [633, 154, 633, 438, Y],
  [978, 166, 4, 1, "#b9b900"], [1221, 212, 13, 1, "#3a4a60"], [886, 249, 2, 1, "#333"],
  [746, 180, 1, 1, "#d0c800"], [718, 187, 1, 1, "#d0c800"], [950, 180, 1, 1, "#d0c800"], [1187, 194, 1, 1, "#d0c800"], [1199, 243, 1, 1, "#d0c800"],
  [633, 270, 633, 26, B], [633, 269, 281, 1, B], [923, 296, 343, 1, "#1d5fa0"],
  [633, 310, 633, 2, O], [633, 309, 159, 1, O], [695, 312, 571, 1, O],
  [633, 350, 633, 6, B], [633, 349, 165, 1, B], [898, 354, 249, 1, L], [1061, 356, 205, 1, D],
  [633, 358, 446, 2, B], [1079, 358, 187, 1, L], [1079, 359, 187, 1, D], [721, 360, 545, 1, D],
  [633, 384, 633, 32, B], [633, 383, 301, 1, B], [812, 416, 454, 1, B],
  [633, 493, 633, 31, B], [633, 492, 585, 1, B], [1169, 524, 97, 1, B],
  [633, 527, 633, 11, B], [1105, 527, 161, 1, Y], [1136, 528, 18, 1, L],
  [633, 530, 472, 1, L], [1183, 531, 83, 1, L], [827, 538, 439, 1, D],
  [633, 551, 633, 3, "#1c56c8"], [1189, 551, 77, 1, Y], [1232, 554, 34, 1, B],
  [733, 554, 60, 1, D], [745, 555, 47, 1, B], [780, 556, 50, 1, D], [830, 555, 110, 1, D], [735, 557, 33, 1, D],
  [792, 555, 200, 1, D], [853, 558, 160, 1, B], [900, 558, 22, 2, B], [943, 557, 100, 2, D], [965, 555, 75, 1, D],
  [1001, 556, 38, 1, W], [1020, 557, 105, 1, B], [1124, 555, 100, 1, D], [1099, 558, 90, 1, D],
  [853, 559, 70, 1, D], [847, 563, 126, 1, D], [980, 563, 23, 1, D], [1027, 565, 8, 1, B], [1257, 563, 2, 1, D],
  [672, 568, 58, 1, D], [1076, 569, 38, 1, D], [633, 573, 60, 1, D], [650, 572, 11, 1, B], [700, 572, 7, 1, D],
  [917, 572, 93, 1, D], [1210, 572, 31, 1, D], [1245, 572, 21, 1, D], [754, 574, 255, 1, D], [1077, 574, 189, 1, D],
  [754, 575, 512, 1, L], [750, 577, 516, 1, D], [633, 576, 112, 1, D], [633, 578, 247, 1, D],
  [642, 579, 12, 1, B], [670, 578, 2, 2, B], [711, 578, 18, 2, B], [899, 579, 11, 1, D], [942, 579, 11, 1, D],
  [1018, 579, 3, 1, D], [1085, 579, 37, 1, D], [1251, 579, 15, 1, D], [1197, 580, 31, 1, D],
  [633, 583, 30, 1, D], [669, 583, 2, 1, D], [684, 584, 28, 1, D], [790, 582, 10, 1, D], [803, 582, 7, 1, D],
  [879, 584, 3, 1, D], [900, 583, 9, 1, D], [914, 584, 17, 1, D], [935, 583, 5, 1, D], [954, 584, 14, 1, D],
  [1117, 583, 3, 1, D], [1137, 583, 28, 1, D], [1162, 584, 3, 1, D], [1172, 583, 6, 1, D], [1182, 584, 16, 1, D], [1234, 584, 32, 1, D],
  [633, 587, 36, 1, D], [810, 587, 26, 1, D], [1060, 585, 43, 1, O],
  [633, 588, 633, 4, W], [633, 591, 100, 1, Y], [644, 588, 10, 1, O], [753, 589, 4, 1, O], [799, 588, 6, 1, O],
  [843, 589, 22, 1, O], [855, 588, 12, 1, O], [912, 589, 35, 1, O], [978, 591, 12, 1, O], [776, 591, 6, 1, O],
  [1040, 588, 160, 1, "#f7c15a"], [1227, 588, 11, 1, D],
  [633, 592, 633, 137, "#00bfff"],
  [860, 592, 270, 1, W], [1108, 592, 10, 1, B], [1122, 592, 9, 1, B], [1132, 592, 134, 1, G],
  [695, 595, 53, 1, O], [752, 594, 6, 1, O], [803, 594, 38, 1, O], [807, 595, 34, 1, O], [857, 594, 25, 1, O], [867, 595, 14, 1, O],
  [1152, 596, 14, 1, O], [1158, 595, 8, 1, O], [1184, 595, 8, 1, O], [1204, 596, 62, 1, O], [988, 596, 6, 1, O], [992, 601, 4, 1, O],
  [816, 598, 26, 1, P], [633, 603, 220, 1, P], [869, 604, 179, 1, P], [907, 603, 23, 1, M], [1258, 604, 8, 1, M],
  [650, 607, 47, 1, O], [633, 610, 633, 3, "#d6aa38"], [952, 610, 301, 2, G], [1253, 611, 13, 2, O],
  [947, 622, 114, 2, M], [1061, 623, 205, 1, P], [1133, 632, 2, 1, P], [1213, 631, 3, 1, P],
  [633, 646, 633, 1, P], [721, 646, 72, 2, M], [875, 646, 41, 2, M],
  [633, 676, 157, 1, P], [1064, 677, 202, 1, P], [864, 682, 48, 1, P], [725, 704, 182, 1, P],
  [864, 709, 203, 1, P], [691, 711, 9, 1, P], [1084, 718, 76, 1, P], [969, 724, 2, 1, G],
];

function DefragWindow() {
  return (
    <section aria-label="MyDefrag" className="absolute top-[71px] left-[622px] z-30 w-[668px] border border-[#b04a20] bg-[#c8c8c8] text-[11px] text-black shadow-[0_2px_16px_rgba(0,0,0,0.6)]">
      <div className="flex h-[30px] items-center bg-[#ac440c] pr-[18px] pl-2 text-white">
        <Icon name="myd" />
        <span className="ml-[5px] whitespace-pre">MyDefrag v4.3.1    Vol: C: - Development ||Zone: Boot - Boot ||Step: File Actions completed. ||...</span>
        <div className="ml-auto flex shrink-0 items-center gap-[35px]">
          <button aria-label="Minimize"><svg viewBox="0 0 10 10" className="size-[10px]"><path d="M0 5.500h10" stroke="#fff" /></svg></button>
          <button aria-label="Maximize"><svg viewBox="0 0 10 10" className="size-[10px]"><path d="M.5.5h9v9h-9Z" fill="none" stroke="#fff" /></svg></button>
          <button aria-label="Close"><CloseGlyph className="size-[10px]" /></button>
        </div>
      </div>
      <div className="flex h-[19px] items-center gap-[13px] bg-white pl-[7px] text-[12px]">
        <button>Run</button>
        <button>View</button>
        <button>Zoom</button>
      </div>
      <div className="px-[10px] font-['Liberation_Sans',sans-serif] leading-4 whitespace-pre">
        <p>Disk C:   Zone 1 of 20   Vacating free area    1.6643%   Moving 655,360 bytes to LCN=5,387,562.</p>
        <p>C:\ProgramData\Kaspersky Lab\AVP21.3\Bases\Cache\sys_critical_obj.dll.b9596237e0c27df71b00fa27bfa3e98d_0</p>
        <div className="flex pt-px">
          <svg viewBox="633 154 633 575" preserveAspectRatio="none" className="h-[575px] min-w-0 flex-1" shapeRendering="crispEdges">
            {strips.map(([x, y, w, h, c], i) => <rect key={i} x={x} y={y} width={w} height={h} fill={c} />)}
          </svg>
          <div className="flex w-[13px] flex-col items-center bg-[#f0f0f0]">
            <button aria-label="Scroll up" className="flex h-[17px] items-center">
              <svg viewBox="0 0 8 6" className="h-1.5 w-2"><path d="M1 5l3-3 3 3" fill="none" stroke="#444" strokeWidth="1.800" /></svg>
            </button>
            <div className="mt-auto h-[17px] w-[11px] bg-[#cdcdcd]" />
            <button aria-label="Scroll down" className="flex h-[18px] items-center">
              <svg viewBox="0 0 8 6" className="h-1.5 w-2"><path d="M1 1l3 3 3-3" fill="none" stroke="#444" strokeWidth="1.800" /></svg>
            </button>
          </div>
        </div>
        <p>LCN=160,441     Bytes=5,784,464, BeginLCN=159,791</p>
        <p>C:\Program Files\Microsoft SQL Server\MSSQL15.SQLEXPRESS\MSSQL\Binn\hkengine.dll</p>
      </div>
    </section>
  );
}

export default function App() {
  return (
    <main className="relative h-screen w-full overflow-hidden bg-[#575757] font-['Open_Sans',sans-serif]">
      <Taskbar />
      <Shortcuts />
      <Explorer />
      <ProcessExplorer />
      <PropertiesDialog />
      <DefragWindow />
    </main>
  );
}
